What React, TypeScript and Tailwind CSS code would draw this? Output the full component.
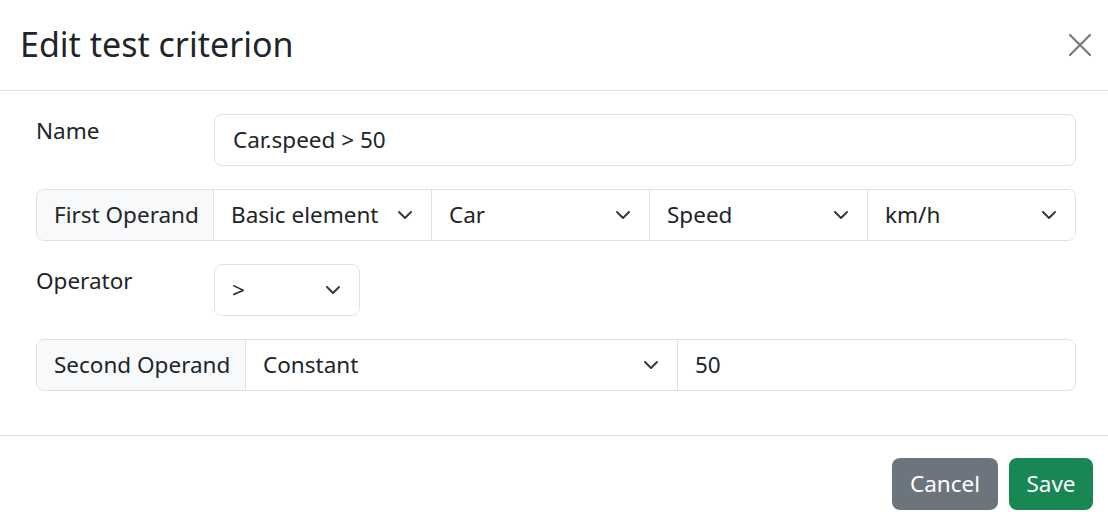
import React from "react";

function Chevron() {
  return (
    <svg width="22" height="16" viewBox="0 0 16 16" className="shrink-0" fill="none">
      <path d="m2 5 6 6 6-6" stroke="#343a40" strokeWidth="2" strokeLinecap="round" strokeLinejoin="round" />
    </svg>
  );
}

function Select({ value, className = "" }: { value: string; className?: string }) {
  return (
    <div className={`flex items-center justify-between pl-[17px] pr-[15px] h-full bg-white ${className}`}>
      <span>{value}</span>
      <Chevron />
    </div>
  );
}

export default function App() {
  return (
    <div className="w-[1108px] h-[525px] bg-white text-[#212529] text-[22.5px] overflow-hidden" style={{ fontFamily: '"Noto Sans", "Open Sans", sans-serif' }}>
      {/* Header */}
      <div className="h-[91px] flex items-center justify-between pl-[20px] pr-[15px] border-b border-[#dee2e6]">
        <h5 className="text-[34px] leading-none pb-[2px]">Edit test criterion</h5>
        <button className="w-[24px] h-[24px] flex items-center justify-center mr-[1px]" aria-label="Close">
          <svg width="24" height="24" viewBox="0 0 24 24" fill="none">
            <path d="M2 2 22 22M22 2 2 22" stroke="#7a7a7a" strokeWidth="2.2" strokeLinecap="round" />
          </svg>
        </button>
      </div>

      {/* Body */}
      <div className="pl-[36px] pr-[32px] pt-[23px] pb-[44px] flex flex-col gap-[23px] border-b border-[#dee2e6]">
        <div className="flex">
          <label className="w-[178px] leading-[1.5]">Name</label>
          <div className="flex-1 h-[52px] border border-[#dee2e6] rounded-[8px] flex items-center px-[18px]">
            Car.speed &gt; 50
          </div>
        </div>

        <div className="flex h-[52px] border border-[#dee2e6] rounded-[8px] overflow-hidden">
          <div className="w-[177px] bg-[#f8f9fa] flex items-center pl-[17px] border-r border-[#dee2e6]">First Operand</div>
          <Select value="Basic element" className="w-[218px] border-r border-[#dee2e6]" />
          <Select value="Car" className="w-[218px] border-r border-[#dee2e6]" />
          <Select value="Speed" className="w-[218px] border-r border-[#dee2e6]" />
          <Select value="km/h" className="flex-1" />
        </div>

        <div className="flex">
          <label className="w-[178px] leading-[1.5]">Operator</label>
          <div className="w-[146px] h-[52px] border border-[#dee2e6] rounded-[8px] overflow-hidden">
            <Select value=">" />
          </div>
        </div>

        <div className="flex h-[52px] border border-[#dee2e6] rounded-[8px] overflow-hidden">
          <div className="w-[209px] bg-[#f8f9fa] flex items-center pl-[17px] border-r border-[#dee2e6]">Second Operand</div>
          <Select value="Constant" className="w-[432px] border-r border-[#dee2e6]" />
          <div className="flex-1 flex items-center pl-[17px]">50</div>
        </div>
      </div>

      {/* Footer */}
      <div className="flex justify-end gap-[11px] pt-[22px] pr-[15px]">
        <button className="h-[52px] w-[106px] rounded-[8px] bg-[#6c757d] text-white">Cancel</button>
        <button className="h-[52px] w-[84px] rounded-[8px] bg-[#198754] text-white">Save</button>
      </div>
    </div>
  );
}
